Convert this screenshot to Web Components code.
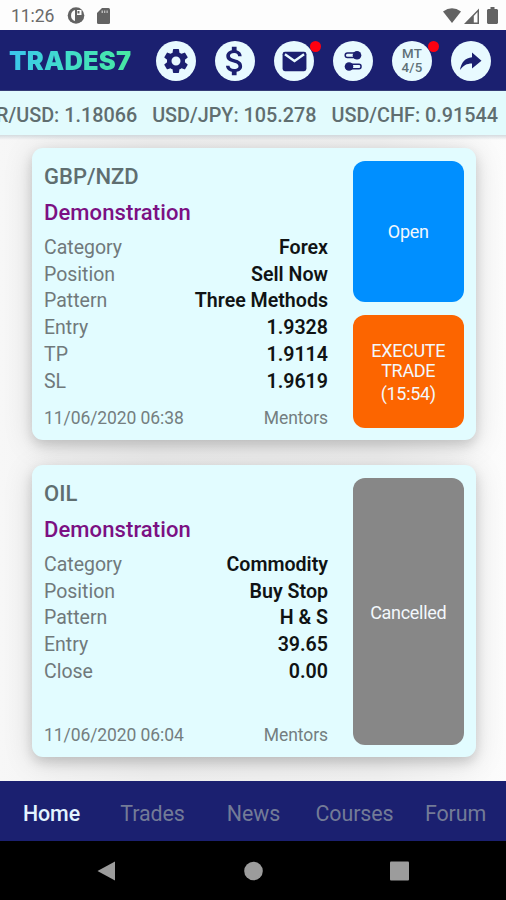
<!DOCTYPE html>
<html lang="en">
<head>
<meta charset="utf-8">
<title>TRADES7</title>
<style>
html,body{margin:0;height:100%}
body{font-family:Roboto,"Liberation Sans",sans-serif;overflow:hidden;background:#000}
</style>
</head>
<body>
<trades-app></trades-app>
<script>
const define = (name, html, setup) => customElements.define(name, class extends HTMLElement {
  constructor() {
    super();
    this.attachShadow({mode: 'open'}).innerHTML = html;
  }
  connectedCallback() { if (setup) setup(this, this.shadowRoot); }
});

define('status-bar', `
<style>
:host{display:flex;height:30px;box-sizing:border-box;align-items:center;background:#fdfdfd;color:#6a6a6a;font-size:17.600px;padding:1px 8px 0 11px}
.time{width:56px;letter-spacing:-.1px}
svg{display:block;fill:#636363}
.left{display:flex;gap:12px;align-items:center;flex:1}
.right{display:flex;align-items:center}
</style>
<span class="time">11:26</span>
<div class="left">
<svg width="18" height="17" viewBox="0 0 18 17"><circle cx="9" cy="8.500" r="8.300"/><path fill="#fdfdfd" d="M8 3v11A5.800 5.800 0 0 1 8 3zM10 3h4.500v5H10z"/><path d="M10.500 4h2v2.500h-2z"/></svg>
<svg width="13" height="16" viewBox="0 0 13 16"><path d="M5 0h6.500Q13 0 13 1.500v13Q13 16 11.500 16h-10Q0 16 0 14.500V5z"/><path fill="#bbb" d="M4.500 2.500H6V5H4.500zM7 2.500h1.300V5H7zM9.500 2.500h1.300V5H9.500z"/></svg>
</div>
<div class="right">
<svg width="18" height="16" viewBox="0 0 18 16" style="margin-right:3px"><path d="M0 3.500Q9-3 18 3.500L9 15z"/></svg>
<svg width="15" height="16" viewBox="0 0 15 16" style="margin-right:8px"><path fill-rule="evenodd" d="M15 .5V16H0zM13.500 4L9.800 8v6.500h3.700z"/></svg>
<svg width="11" height="17" viewBox="0 0 11 17"><path d="M3.500 0h4v2H10l1 1v13l-1 1H1l-1-1V3l1-1h2.500z"/></svg>
</div>`);

define('round-button', `
<style>
:host{display:flex;position:relative;width:40px;height:40px;border-radius:50%;background:#e8faff;color:#1b2070;align-items:center;justify-content:center;flex:none}
.dot{display:none;position:absolute;right:-7px;top:-.5px;width:11px;height:11px;border-radius:50%;background:#ff0010}
:host([alert]) .dot{display:block}
</style><slot></slot><i class="dot"></i>`);

define('app-header', `
<style>
:host{display:flex;height:61px;box-sizing:border-box;background:#1b2070;align-items:center;padding:2px 15px 0 9px;justify-content:space-between;border-bottom:1px solid #343c76}
.logo{font:900 25.500px/30px Inter,sans-serif;letter-spacing:.2px;background:linear-gradient(100deg,#3ac4ee,#41dccb 45%,#48e8a0);-webkit-background-clip:text;background-clip:text;color:transparent}
.tools{display:flex;gap:19px}
svg{display:block;fill:currentColor}
.mt{display:grid;font-size:13.300px;line-height:14px;text-align:center;color:#5e7077;font-weight:500;letter-spacing:.2px}
</style>
<div class="logo">TRADES7</div>
<div class="tools">
<round-button><svg width="30" height="30" viewBox="0 0 24 24"><path d="M19.140 12.940c.04-.3.060-.61.060-.94 0-.32-.02-.64-.07-.94l2.030-1.580a.49.49 0 0 0 .12-.61l-1.920-3.320a.488.488 0 0 0-.59-.22l-2.390.96c-.5-.38-1.030-.7-1.620-.94l-.36-2.540a.484.484 0 0 0-.48-.41h-3.840c-.24 0-.43.17-.47.41l-.36 2.540c-.59.24-1.130.57-1.620.94l-2.390-.96c-.22-.08-.47 0-.59.22L2.740 8.870c-.12.21-.08.47.12.61l2.030 1.580c-.05.3-.09.63-.09.94s.02.64.07.94l-2.030 1.580a.49.49 0 0 0-.12.61l1.920 3.320c.12.22.37.29.59.22l2.390-.96c.5.38 1.030.7 1.620.94l.36 2.540c.05.24.24.41.48.41h3.840c.24 0 .44-.17.47-.41l.36-2.540c.59-.24 1.130-.56 1.620-.94l2.390.96c.22.08.47 0 .59-.22l1.920-3.320c.12-.22.07-.47-.12-.61l-2.010-1.580zM12 15.600A3.600 3.600 0 1 1 12 8.400a3.600 3.600 0 0 1 0 7.200z"/></svg></round-button>
<round-button><svg width="38" height="38" viewBox="0 0 24 24"><path d="M11.800 10.900c-2.270-.59-3-1.200-3-2.150 0-1.090 1.010-1.850 2.700-1.850 1.780 0 2.440.85 2.500 2.100h2.210c-.07-1.720-1.120-3.300-3.210-3.810V3h-3v2.160c-1.940.42-3.500 1.680-3.500 3.610 0 2.310 1.910 3.460 4.700 4.130 2.500.6 3 1.480 3 2.410 0 .69-.49 1.790-2.700 1.790-2.060 0-2.870-.92-2.980-2.100h-2.200c.12 2.190 1.760 3.420 3.680 3.830V21h3v-2.150c1.950-.37 3.500-1.500 3.500-3.550 0-2.840-2.430-3.810-4.700-4.400z"/></svg></round-button>
<round-button alert><svg width="25" height="21" viewBox="0 0 26 22"><rect x=".5" y=".8" width="25" height="20.400" rx="2.500"/><path d="M3 3.500l10 7 10-7" fill="none" stroke="#e8faff" stroke-width="2.500"/></svg></round-button>
<round-button><svg width="18" height="22" viewBox="0 0 18 22"><rect x="1.200" y="3" width="12" height="4.600" rx="2.300" fill="none" stroke="currentColor" stroke-width="1.500"/><circle cx="13" cy="5.300" r="4.300"/><rect x="4" y="14.200" width="13" height="4.600" rx="2" fill="none" stroke="currentColor" stroke-width="1.500"/><circle cx="5" cy="16.500" r="4.300"/></svg></round-button>
<round-button alert><div class="mt"><span>MT</span><span>4/5</span></div></round-button>
<round-button><svg width="24" height="20" viewBox="0 0 24 20"><path d="M13 1.500l9.500 8.200L13 17.500v-5C7.500 12.500 4.500 14.500 1 19 2.200 11.500 6.200 7 13 6.300z"/></svg></round-button>
</div>`);

define('rate-ticker', `
<style>
:host{display:flex;height:44px;box-sizing:border-box;background:#e2fbfd;align-items:center;justify-content:flex-end;padding:4px 8px 0 0;gap:15px;color:#606e70;font-size:19.800px;font-weight:500;white-space:nowrap;overflow:hidden}
</style><span>EUR/USD: 1.18066</span><span>USD/JPY: 105.278</span><span>USD/CHF: 0.91544</span>`);

define('data-row', `
<style>
:host{display:flex;justify-content:space-between;height:26.700px;line-height:26.700px;font-size:19.500px;color:#70797b}
b{font-weight:600;color:#101314;font-size:19.600px}
</style><span><slot></slot></span><b><slot name="value"></slot></b>`);

define('action-tile', `
<style>
:host{display:flex;flex:1;align-items:center;justify-content:center;text-align:center;border-radius:12px;color:#f3f8fc;font-size:18px;letter-spacing:-.3px;line-height:20px;padding-top:2px;box-sizing:border-box;background:var(--tile)}
</style><div><slot></slot></div>`);

define('trade-card', `
<style>
:host{display:flex;box-sizing:border-box;height:292px;padding:12.500px 12.500px 12px 12px;border-radius:11px;background:#e2fcff;box-shadow:0 5px 12px rgba(0,0,0,.15),0 5px 30px rgba(0,0,0,.13)}
.info{width:284px;display:flex;flex-direction:column}
h2,h3{margin:0;font-size:22px;font-weight:500;line-height:31px;height:33px;color:#5f6e70}
h3{color:#7b1083;line-height:37px;height:41.200px;font-weight:500;letter-spacing:.1px}
.foot{margin-top:auto;display:flex;justify-content:space-between;font-size:17.500px;letter-spacing:-.08px;line-height:22px;margin-bottom:-.5px;color:#747e80}
.actions{margin-left:25px;flex:1;display:flex;flex-direction:column;gap:13.500px}
</style>
<div class="info"><h2></h2><h3>Demonstration</h3><slot></slot><div class="foot"><span class="date"></span><span>Mentors</span></div></div>
<div class="actions"><slot name="action"></slot></div>`, (host, root) => {
  root.querySelector('h2').textContent = host.getAttribute('symbol');
  root.querySelector('.date').textContent = host.getAttribute('date');
});

define('tab-bar', `
<style>
:host{display:grid;grid-template-columns:repeat(5,1fr);height:60px;box-sizing:border-box;background:#1b2070;color:#737b97;font-size:21.400px;letter-spacing:-.1px;align-items:center;text-align:center;padding:4px 0 0 1px}
.on{color:#e2f4ff;font-weight:500}
</style><span class="on">Home</span><span>Trades</span><span>News</span><span>Courses</span><span>Forum</span>`);

define('system-nav', `
<style>
:host{display:grid;grid-template-columns:repeat(3,146px);justify-content:center;justify-items:center;align-items:center;height:59px;background:#000}
svg{fill:#9c9c9c;display:block}
</style>
<svg width="20" height="20"><path d="M18 .5v19L.5 10z"/></svg>
<svg width="20" height="20"><circle cx="10.500" cy="10" r="9.300"/></svg>
<svg width="20" height="20"><rect x="1" y=".5" width="19" height="19" rx="1"/></svg>`);

define('trades-app', `
<style>
:host{display:flex;flex-direction:column;width:506px;height:900px}
main{flex:1;display:flex;flex-direction:column;gap:25px;padding:13.400px 30px 0 32px;overflow:hidden;background:linear-gradient(#d5dbdf,rgba(240,240,240,0) 5px),linear-gradient(90deg,#f7f7f7,#f0f0f0 30%,#f2f2f2 75%,#fcfcfc)}
.time{display:block;margin-top:3px}
</style>
<status-bar></status-bar><app-header></app-header><rate-ticker></rate-ticker>
<main>
<trade-card symbol="GBP/NZD" date="11/06/2020 06:38">
<data-row>Category<span slot="value">Forex</span></data-row>
<data-row>Position<span slot="value">Sell Now</span></data-row>
<data-row>Pattern<span slot="value">Three Methods</span></data-row>
<data-row>Entry<span slot="value">1.9328</span></data-row>
<data-row>TP<span slot="value">1.9114</span></data-row>
<data-row>SL<span slot="value">1.9619</span></data-row>
<action-tile slot="action" style="--tile:#008fff;flex:none;height:141px">Open</action-tile>
<action-tile slot="action" style="--tile:#fc6500;padding-top:1px">EXECUTE<br>TRADE<span class="time">(15:54)</span></action-tile>
</trade-card>
<trade-card symbol="OIL" date="11/06/2020 06:04">
<data-row>Category<span slot="value">Commodity</span></data-row>
<data-row>Position<span slot="value">Buy Stop</span></data-row>
<data-row>Pattern<span slot="value">H &amp; S</span></data-row>
<data-row>Entry<span slot="value">39.65</span></data-row>
<data-row>Close<span slot="value">0.00</span></data-row>
<action-tile slot="action" style="--tile:#878787">Cancelled</action-tile>
</trade-card>
</main>
<tab-bar></tab-bar><system-nav></system-nav>`);
</script>
</body>
</html>
